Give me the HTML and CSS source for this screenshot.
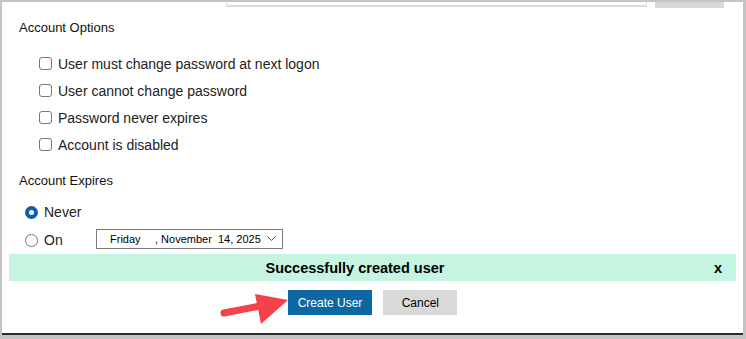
FILE: index.html
```html
<!DOCTYPE html>
<html lang="en">
<head>
    <meta charset="UTF-8">
    <meta name="viewport" content="width=device-width, initial-scale=1.0">
    <title>New User</title>
    <link rel="stylesheet" href="styles.css">
</head>
<body>
    <div class="panel">
        <div class="top-row">
            <div class="top-input"></div>
            <div class="top-btn"></div>
        </div>

        <h2 class="section-title">Account Options</h2>
        <ul class="option-list">
            <li><label class="check-row"><input type="checkbox"><span>User must change password at next logon</span></label></li>
            <li><label class="check-row"><input type="checkbox"><span>User cannot change password</span></label></li>
            <li><label class="check-row"><input type="checkbox"><span>Password never expires</span></label></li>
            <li><label class="check-row"><input type="checkbox"><span>Account is disabled</span></label></li>
        </ul>

        <h2 class="section-title title-expires">Account Expires</h2>
        <div class="expire-list">
            <label class="radio-row"><input type="radio" name="expires" checked><span>Never</span></label>
            <div class="radio-row">
                <label class="radio-label"><input type="radio" name="expires"><span class="on-label">On</span></label>
                <div class="date-box">
                    <span class="date-day">Friday</span><span class="date-rest">, November  14, 2025</span>
                    <svg class="chevron" width="9" height="6" viewBox="0 0 9 6"><polyline points="0.5,0.5 4.5,4.5 8.5,0.5" fill="none" stroke="#555" stroke-width="1"/></svg>
                </div>
            </div>
        </div>

        <div class="alert">
            <span class="alert-text">Successfully created user</span>
            <span class="alert-close">x</span>
        </div>

        <div class="actions">
            <svg class="pointer-arrow" width="82" height="40" viewBox="0 0 82 40">
                <line x1="14" y1="25" x2="50" y2="18" stroke="#f2434b" stroke-width="7" stroke-linecap="round"/>
                <polygon points="45,6 78,12 51,36" fill="#f2434b"/>
            </svg>
            <button class="btn btn-primary">Create User</button>
            <button class="btn btn-cancel">Cancel</button>
        </div>
    </div>
</body>
</html>
```

FILE: styles.css
```css
body {
    margin: 0;
    background-color: #c4c4c4;
    font-family: "Liberation Sans", Arial, sans-serif;
    color: #222;
}
.panel {
    margin: 2px 3px 0 2px;
    height: 331px;
    background-color: #fff;
    border-bottom: 2px solid #2a2a2a;
    overflow: hidden;
}
.top-row {
    display: flex;
    align-items: flex-start;
    height: 6px;
}
.top-input {
    margin-left: 224px;
    width: 419px;
    height: 3px;
    border: 1px solid #dcdcdc;
    border-top: none;
    border-bottom-width: 2px;
}
.top-btn {
    margin-left: 8px;
    width: 69px;
    height: 6px;
    background-color: #d9d9d9;
}
.section-title {
    margin: 12px 0 0 17px;
    font-size: 13px;
    font-weight: normal;
    line-height: 15px;
    color: #111;
}
.title-expires {
    margin-top: 15px;
}
.option-list {
    list-style: none;
    margin: 15px 0 0;
    padding: 0 0 0 37px;
}
.check-row {
    display: flex;
    align-items: center;
    gap: 6px;
    height: 27px;
    font-size: 14px;
}
.check-row input {
    appearance: none;
    width: 13px;
    height: 13px;
    margin: 0;
    border: 1px solid #767676;
    border-radius: 3px;
    background-color: #fff;
}
.expire-list {
    margin-top: 10px;
    padding-left: 23px;
}
.radio-row,
.radio-label {
    display: flex;
    align-items: center;
    height: 28px;
    font-size: 14px;
}
.radio-row input {
    appearance: none;
    width: 13px;
    height: 13px;
    margin: 0 6px 0 0;
    border: 1px solid #767676;
    border-radius: 50%;
    background-color: #fff;
}
.radio-row input:checked {
    border: 4px solid #0c5eaf;
}
.on-label {
    width: 52px;
}
.date-box {
    display: flex;
    align-items: center;
    width: 172px;
    height: 18px;
    margin-top: -2px;
    padding-left: 13px;
    border: 1px solid #7a7a7a;
    font-size: 11px;
    color: #000;
}
.date-day {
    width: 45px;
}
.date-rest {
    white-space: pre;
}
.chevron {
    margin-left: auto;
    margin-right: 6px;
}
.alert {
    display: flex;
    align-items: center;
    height: 27px;
    margin: 0 7px;
    padding-right: 14px;
    background-color: #c5f5e1;
    font-size: 14.5px;
    font-weight: bold;
    color: #000;
}
.alert-text {
    flex: 1;
    text-align: center;
}
.alert-close {
    margin-left: 13px;
}
.actions {
    position: relative;
    display: flex;
    justify-content: center;
    gap: 11px;
    margin-top: 9px;
}
.pointer-arrow {
    position: absolute;
    left: 208px;
    top: -2px;
}
.btn {
    height: 25px;
    min-width: 74px;
    padding: 0 10px;
    border: none;
    border-radius: 0;
    font-family: "Liberation Sans", Arial, sans-serif;
    font-size: 12px;
    cursor: pointer;
}
.btn-primary {
    background-color: #0d67a3;
    color: #fff;
}
.btn-cancel {
    background-color: #d9d9d9;
    color: #000;
}
```
